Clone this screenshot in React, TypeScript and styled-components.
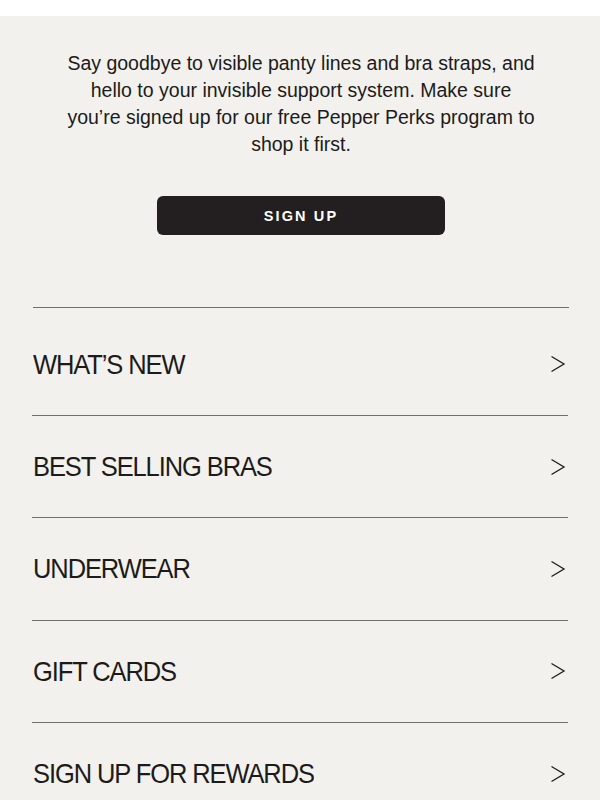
import styled, { createGlobalStyle } from "styled-components";

const GlobalStyle = createGlobalStyle`
  html, body {
    margin: 0;
    padding: 0;
    background: #ffffff;
  }
  body {
    font-family: "Liberation Sans", Arial, sans-serif;
    color: #1c1b1a;
  }
`;

const Page = styled.div`
  margin-top: 16px;
  background: #f2f1ed;
  min-height: 784px;
  padding: 34px 32px 0 32px;
  box-sizing: border-box;
`;

const Intro = styled.section`
  display: flex;
  flex-direction: column;
  align-items: center;
  padding-bottom: 72px;
  border-bottom: 1px solid #6f6f6d;
  margin: 0 -1px 0 1px;
`;

const Copy = styled.p`
  margin: 0;
  max-width: 476px;
  text-align: center;
  font-size: 19.5px;
  line-height: 27px;
  color: #1c1b1a;
`;

const SignUpButton = styled.button`
  margin-top: 38px;
  width: 288px;
  height: 39px;
  border: none;
  border-radius: 6px;
  background: #231f20;
  color: #ffffff;
  font-family: "Liberation Sans", Arial, sans-serif;
  font-weight: 700;
  font-size: 14.5px;
  letter-spacing: 2.1px;
  cursor: pointer;
`;

const Menu = styled.ul`
  list-style: none;
  margin: 5.5px 0 0 0;
  padding: 0;
`;

const MenuRow = styled.li`
  display: flex;
  align-items: center;
  justify-content: space-between;
  height: 101.4px;
  padding: 0 2px 0 1px;
  border-bottom: 1px solid #6f6f6d;
`;

const MenuLabel = styled.span`
  font-size: 25.5px;
  letter-spacing: -1.1px;
  color: #1c1b1a;
  transform: scaleY(1.1);
`;

const Chevron = () => (
  <svg width="16" height="18" viewBox="0 0 16 18" fill="none">
    <polyline
      points="1.5,1.5 14,9 1.5,16.5"
      stroke="#1c1b1a"
      strokeWidth="1.3"
      strokeLinejoin="miter"
    />
  </svg>
);

const items = [
  "WHAT’S NEW",
  "BEST SELLING BRAS",
  "UNDERWEAR",
  "GIFT CARDS",
  "SIGN UP FOR REWARDS",
];

export default function App() {
  return (
    <>
      <GlobalStyle />
      <Page>
        <Intro>
          <Copy>
            Say goodbye to visible panty lines and bra straps, and hello to
            your invisible support system. Make sure you’re signed up for our
            free Pepper Perks program to shop it first.
          </Copy>
          <SignUpButton>SIGN UP</SignUpButton>
        </Intro>
        <Menu>
          {items.map((label) => (
            <MenuRow key={label}>
              <MenuLabel>{label}</MenuLabel>
              <Chevron />
            </MenuRow>
          ))}
        </Menu>
      </Page>
    </>
  );
}
